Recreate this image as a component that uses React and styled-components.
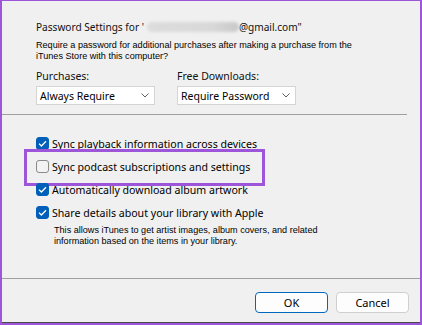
import React from "react";
import styled, { createGlobalStyle } from "styled-components";

const Global = createGlobalStyle`
  html, body { margin: 0; padding: 0; background: #f0f0f0; }
  * { box-sizing: border-box; }
`;

const Frame = styled.div`
  width: 422px;
  height: 325px;
  background: #f0f0f0;
  border: 2px solid #9d55d9;
  border-top-width: 1px;
  box-shadow: inset 0 -1px 0 #4a4a4a;
  display: flex;
  flex-direction: column;
  font-family: "Noto Sans", "Open Sans", sans-serif;
  color: #000;
`;

const Header = styled.div`
  height: 113px;
  padding: 18px 0 0 34px;
`;

const Title = styled.div`
  font-size: 10.1px;
  line-height: 16px;
  display: flex;
  align-items: center;
  color: #111;
`;

const Blurred = styled.span`
  display: inline-block;
  width: 92px;
  height: 10px;
  margin: 0 0 0 3px;
  border-radius: 5px;
  background: linear-gradient(90deg, #dcdcdc 0%, #d8d8d8 70%, #c8c8c8 100%);
  filter: blur(1.5px);
`;

const Small = styled.div`
  font-family: "Liberation Sans", Arial, sans-serif;
  font-size: 9.1px;
  line-height: 11px;
  margin-top: ${(p) => p.$top || 0}px;
  padding-left: ${(p) => p.$indent || 0}px;
`;

const Pickers = styled.div`
  display: grid;
  grid-template-columns: 119px 119px;
  column-gap: 22px;
  margin-top: 6px;
`;

const Label = styled.div`
  font-size: 10.5px;
  line-height: 16px;
  color: #111;
`;

const Select = styled.div`
  margin-top: 2px;
  height: 19px;
  background: #fff;
  border: 1px solid #d4d4d4;
  display: flex;
  align-items: center;
  justify-content: space-between;
  padding: 0 5px 0 3px;
  font-size: 10.5px;
  white-space: nowrap;
`;

const Rule = styled.div`
  height: 1px;
  background: #a0a0a0;
  margin-right: ${(p) => p.$right || 0}px;
`;

const Options = styled.div`
  flex: 1;
  padding: 17px 0 0 34px;
`;

const Row = styled.div`
  position: relative;
  height: 23px;
  display: flex;
  align-items: center;
  gap: 3px;
  font-size: 10.6px;

  ${(p) =>
    p.$highlight &&
    `
    &::after {
      content: "";
      position: absolute;
      left: -12px;
      top: -6px;
      width: 235px;
      height: 31px;
      border: 3px solid #9d55d9;
    }
  `}
`;

const Box = styled.span`
  width: 13px;
  height: 13px;
  border-radius: 3px;
  flex: none;
  display: flex;
  align-items: center;
  justify-content: center;
  background: ${(p) => (p.$on ? "#005fb8" : "#f3f3f3")};
  border: 1px solid ${(p) => (p.$on ? "#005fb8" : "#8a8a8a")};
`;

const Footer = styled.div`
  height: 44px;
  display: flex;
  justify-content: flex-end;
  align-items: flex-start;
  gap: 8px;
  padding: 13px 11px 0 0;
`;

const Button = styled.button`
  width: 73px;
  height: 21px;
  background: #fdfdfd;
  border: 1px solid ${(p) => (p.$primary ? "#0067c0" : "#cfcfcf")};
  border-radius: 4px;
  font-family: "Noto Sans", "Open Sans", sans-serif;
  font-size: 11px;
  line-height: 16px;
  color: #000;
  padding: 0;
`;

function Chevron() {
  return (
    <svg width="8" height="5" viewBox="0 0 8 5">
      <path d="M0.5 0.5 L4 4 L7.5 0.5" fill="none" stroke="#606060" strokeWidth="1" />
    </svg>
  );
}

function Check({ on }) {
  return (
    <Box $on={on}>
      {on && (
        <svg width="9" height="7" viewBox="0 0 9 7">
          <path d="M1 3.6 L3.4 6 L8 1.2" fill="none" stroke="#fff" strokeWidth="1.3" />
        </svg>
      )}
    </Box>
  );
}

const rows = [
  { text: "Sync playback information across devices", on: true },
  { text: "Sync podcast subscriptions and settings", on: false, highlight: true },
  { text: "Automatically download album artwork", on: true },
  { text: "Share details about your library with Apple", on: true },
];

export default function App() {
  return (
    <>
      <Global />
      <Frame>
        <Header>
          <Title>
            Password Settings for '<Blurred />@gmail.com"
          </Title>
          <Small $top={5}>
            Require a password for additional purchases after making a purchase from the
            <br />
            iTunes Store with this computer?
          </Small>
          <Pickers>
            <div>
              <Label>Purchases:</Label>
              <Select>
                Always Require
                <Chevron />
              </Select>
            </div>
            <div>
              <Label>Free Downloads:</Label>
              <Select>
                Require Password
                <Chevron />
              </Select>
            </div>
          </Pickers>
        </Header>
        <Rule $right={13} />
        <Options>
          {rows.map((r) => (
            <Row key={r.text} $highlight={r.highlight}>
              <Check on={r.on} />
              {r.text}
            </Row>
          ))}
          <Small $indent={18} $top={1}>
            This allows iTunes to get artist images, album covers, and related
            <br />
            information based on the items in your library.
          </Small>
        </Options>
        <Rule />
        <Footer>
          <Button $primary>OK</Button>
          <Button>Cancel</Button>
        </Footer>
      </Frame>
    </>
  );
}
